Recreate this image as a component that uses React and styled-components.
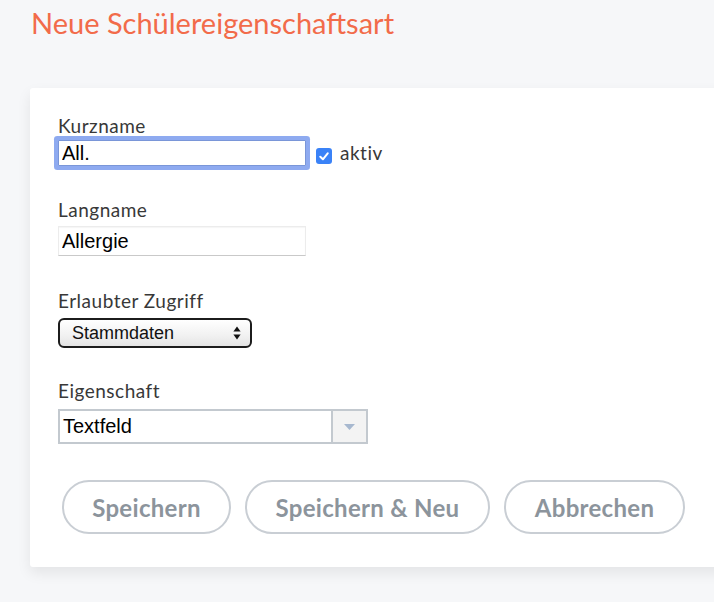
import React from "react";
import styled, { createGlobalStyle } from "styled-components";

const Global = createGlobalStyle`
  html, body { margin: 0; padding: 0; }
  body {
    background: #f6f7f9;
    width: 714px;
    height: 602px;
    overflow: hidden;
    font-family: Lato, "Noto Sans", sans-serif;
  }
`;

const Page = styled.div`
  padding: 6px 0 30px 30px;
  width: 714px;
  box-sizing: border-box;
  overflow: hidden;
`;

const Title = styled.h1`
  margin: 0 0 0 1px;
  font-family: Lato, "Noto Sans", sans-serif;
  font-weight: 400;
  font-size: 29px;
  line-height: 34px;
  color: #f26b4a;
`;

const Card = styled.div`
  margin-top: 48px;
  width: 720px;
  background: #fff;
  border-radius: 3px;
  box-shadow: 0 6px 14px rgba(0, 0, 0, 0.08);
  padding: 27px 28px 33px;
  box-sizing: border-box;
`;

const Field = styled.div`
  margin-bottom: ${(p) => p.$gap}px;
`;

const Label = styled.label`
  display: block;
  font-size: 19px;
  line-height: 22px;
  letter-spacing: 0.5px;
  color: #383838;
  margin-bottom: ${(p) => p.$gap}px;
`;

const Row = styled.div`
  display: flex;
  align-items: center;
`;

const TextInput = styled.input`
  box-sizing: border-box;
  font-family: "Liberation Sans", Arial, sans-serif;
  font-size: 20px;
  color: #000;
  background: #fff;
  outline: none;
  margin: 0;
`;

const FocusInput = styled(TextInput)`
  width: 248px;
  height: 26px;
  padding: 0 3px;
  border: 1px solid #7a96d8;
  box-shadow: 0 0 0 4px #8eaaf0;
  border-radius: 1px;
`;

const PlainInput = styled(TextInput)`
  width: 248px;
  height: 30px;
  padding: 0 3px;
  border: 1px solid #ececec;
  border-bottom-color: #c9c9c9;
  box-shadow: inset 0 1px 1px rgba(0, 0, 0, 0.04);
`;

const Check = styled.span`
  display: inline-flex;
  align-items: center;
  justify-content: center;
  width: 16px;
  height: 16px;
  border-radius: 3px;
  background: #3a82f7;
  margin: 6px 8px 0 10px;
`;

const CheckText = styled.span`
  font-size: 19px;
  letter-spacing: 0.5px;
  color: #383838;
  margin-top: -2px;
`;

const NativeSelect = styled.div`
  box-sizing: border-box;
  width: 194px;
  height: 30px;
  border: 2px solid #1c1c1c;
  border-radius: 6px;
  background: linear-gradient(#ffffff, #f1f1f1 60%, #e4e4e4);
  display: flex;
  align-items: center;
  justify-content: space-between;
  padding: 0 9px 0 12px;
  font-family: "Liberation Sans", Arial, sans-serif;
  font-size: 18px;
  color: #111;
`;

const Combo = styled.div`
  box-sizing: border-box;
  width: 310px;
  height: 35px;
  border: 2px solid #c3c9cf;
  display: flex;
  background: #fff;
`;

const ComboText = styled.div`
  flex: 1;
  display: flex;
  align-items: center;
  padding-left: 3px;
  font-family: "Liberation Sans", Arial, sans-serif;
  font-size: 20px;
  color: #000;
`;

const ComboButton = styled.div`
  width: 33px;
  border-left: 2px solid #c3c9cf;
  background: #f3f3f3;
  display: flex;
  align-items: center;
  justify-content: center;
`;

const Buttons = styled.div`
  display: flex;
  gap: 14px;
  padding-left: 4px;
`;

const Button = styled.button`
  box-sizing: border-box;
  height: 54px;
  width: ${(p) => p.$w}px;
  border: 2px solid #c9ced4;
  border-radius: 27px;
  background: #fff;
  color: #8c949c;
  font-family: Lato, "Noto Sans", sans-serif;
  font-weight: 700;
  font-size: 24px;
  letter-spacing: 0.3px;
  padding: 0;
  cursor: pointer;
`;

export default function App() {
  return (
    <>
      <Global />
      <Page>
        <Title>Neue Schülereigenschaftsart</Title>
        <Card>
          <Field $gap={33}>
            <Label $gap={3}>Kurzname</Label>
            <Row>
              <FocusInput defaultValue="All." />
              <Check>
                <svg width="10" height="9" viewBox="0 0 10 9">
                  <path d="M1.3 4.8 L3.9 7.3 L8.7 1.4" fill="none" stroke="#fff" strokeWidth="2" strokeLinecap="round" strokeLinejoin="round" />
                </svg>
              </Check>
              <CheckText>aktiv</CheckText>
            </Row>
          </Field>
          <Field $gap={34}>
            <Label $gap={5}>Langname</Label>
            <PlainInput defaultValue="Allergie" />
          </Field>
          <Field $gap={32}>
            <Label $gap={6}>Erlaubter Zugriff</Label>
            <NativeSelect>
              <span>Stammdaten</span>
              <svg width="8" height="14" viewBox="0 0 8 14">
                <path d="M4 0.5 L7.6 5.6 H0.4 Z" fill="#111" />
                <path d="M4 13.5 L7.6 8.4 H0.4 Z" fill="#111" />
              </svg>
            </NativeSelect>
          </Field>
          <Field $gap={36}>
            <Label $gap={7}>Eigenschaft</Label>
            <Combo>
              <ComboText>Textfeld</ComboText>
              <ComboButton>
                <svg width="11" height="6" viewBox="0 0 11 6">
                  <path d="M0 0 H11 L5.5 6 Z" fill="#a7b8cf" />
                </svg>
              </ComboButton>
            </Combo>
          </Field>
          <Buttons>
            <Button $w={169}>Speichern</Button>
            <Button $w={245}>Speichern &amp; Neu</Button>
            <Button $w={181}>Abbrechen</Button>
          </Buttons>
        </Card>
      </Page>
    </>
  );
}
